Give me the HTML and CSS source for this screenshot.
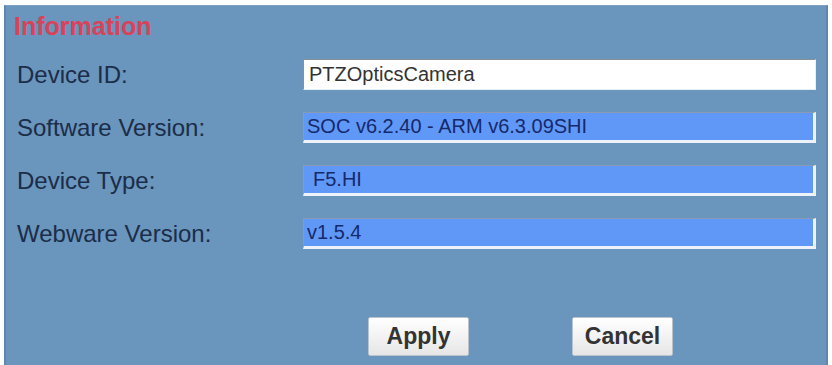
FILE: index.html
```html
<!DOCTYPE html>
<html lang="en">
<head>
    <meta charset="UTF-8">
    <title>Information</title>
    <link rel="stylesheet" href="styles.css">
</head>
<body>
    <div class="panel">
        <div class="title">Information</div>

        <div class="form">
            <label class="label">Device ID:</label>
            <input class="field" type="text" value="PTZOpticsCamera">

            <label class="label">Software Version:</label>
            <input class="field readonly" type="text" value="SOC v6.2.40 - ARM v6.3.09SHI" readonly>

            <label class="label">Device Type:</label>
            <input class="field readonly indent" type="text" value="F5.HI" readonly>

            <label class="label">Webware Version:</label>
            <input class="field readonly" type="text" value="v1.5.4" readonly>
        </div>

        <div class="buttons">
            <button class="btn apply">Apply</button>
            <button class="btn cancel">Cancel</button>
        </div>
    </div>
</body>
</html>
```

FILE: styles.css
```css
/* Page */
* {
    margin: 0;
    padding: 0;
    box-sizing: border-box;
}

body {
    background: #fff;
    font-family: 'Liberation Sans', Arial, sans-serif;
}

.panel {
    margin: 5px 4px 0 4px;
    height: 360px;
    background: #6a95bd;
    border-left: 2px solid #5f87ad;
    border-right: 2px solid #5f87ad;
    border-top: 1px solid #7ea3c6;
    padding: 7px 0 0 8px;
}

.title {
    color: #d8435a;
    font-size: 25px;
    font-weight: bold;
    line-height: 26px;
}

/* Form rows */
.form {
    display: grid;
    grid-template-columns: 286px 513px;
    row-gap: 22px;
    margin-top: 20px;
    padding-left: 3px;
}

.label {
    color: #1b2d48;
    font-size: 24px;
    line-height: 31px;
    display: flex;
    align-items: center;
}

.field {
    height: 31px;
    font-family: 'Liberation Sans', Arial, sans-serif;
    font-size: 20px;
    color: #333;
    background: #fff;
    border: 1px solid;
    border-color: #8a8f99 #e8eef6 #e8eef6 #8a8f99;
    padding: 0 5px;
    outline: none;
}

.readonly {
    background: #6098f8;
    color: #16296a;
    border-color: #8a9ab2 #eef2fa #eef2fa #8a9ab2;
    border-width: 1px 3px 3px 1px;
    padding-left: 3px;
}

.indent {
    padding-left: 9px;
}

/* Buttons */
.buttons {
    display: flex;
    gap: 103px;
    padding-left: 354px;
    margin-top: 68px;
}

.btn {
    width: 101px;
    height: 39px;
    font-family: 'Liberation Sans', Arial, sans-serif;
    font-size: 23px;
    font-weight: bold;
    color: #333;
    background: linear-gradient(to bottom, #ffffff, #e6e6e6);
    border: 1px solid #b9c3cc;
    border-radius: 2px;
    cursor: pointer;
}
```
